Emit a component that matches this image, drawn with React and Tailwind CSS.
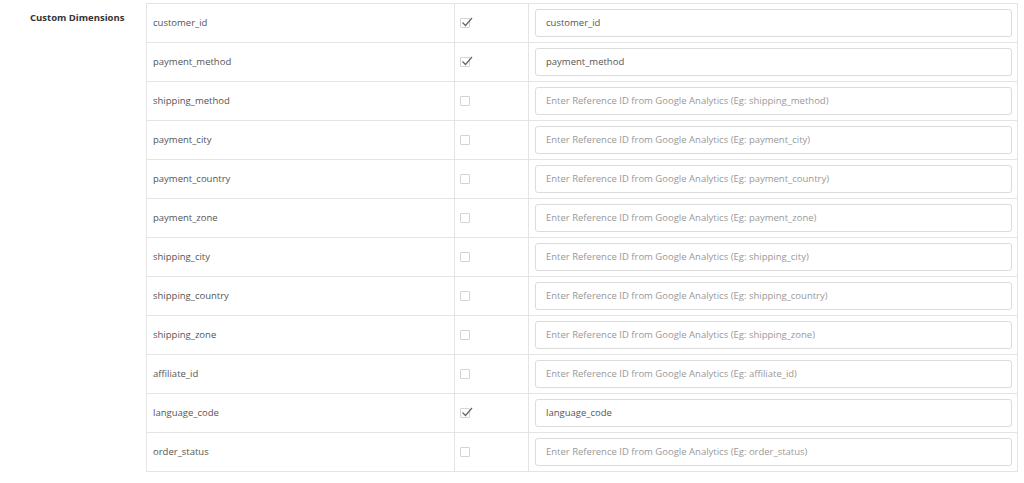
import React from 'react';

const rows = [
  { name: 'customer_id', on: true },
  { name: 'payment_method', on: true },
  { name: 'shipping_method' },
  { name: 'payment_city' },
  { name: 'payment_country' },
  { name: 'payment_zone' },
  { name: 'shipping_city' },
  { name: 'shipping_country' },
  { name: 'shipping_zone' },
  { name: 'affiliate_id' },
  { name: 'language_code', on: true },
  { name: 'order_status' },
];

const Check = ({ on }) => (
  <span className="relative inline-block w-[10px] h-[10px] border border-[#d4d4d4] rounded-[1px] bg-white">
    {on && (
      <svg viewBox="0 0 12 12" className="absolute left-[0px] top-[-3px] w-[12px] h-[12px]">
        <path d="M1.5 6.5 L4.5 9.5 L11 2" fill="none" stroke="#666" strokeWidth="1.2" />
      </svg>
    )}
  </span>
);

export default function App() {
  return (
    <div
      className="flex bg-white w-[1024px] h-[483px] pt-[3px] text-[9.5px] text-[#555]"
      style={{ fontFamily: '"Open Sans", "Liberation Sans", sans-serif' }}
    >
      <div className="w-[146px] shrink-0 pl-[30px] pt-[8px] font-bold text-[#333]">Custom Dimensions</div>
      <div className="w-[872px] border border-[#e4e4e4] self-start">
        {rows.map((r, i) => (
          <div key={r.name} className={`flex ${i ? 'h-[39px] border-t border-[#e4e4e4]' : 'h-[38px]'}`}>
            <div className="w-[307px] flex items-center pl-[6px]">{r.name}</div>
            <div className="w-[74px] border-l border-[#e4e4e4] flex items-center pl-[5px]">
              <Check on={r.on} />
            </div>
            <div className="flex-1 border-l border-[#e4e4e4] flex items-center pl-[6px] pr-[5px]">
              <div className="w-full h-[28px] border border-[#dcdcdc] rounded-[3px] flex items-center pl-[10px]">
                {r.on ? (
                  <span className="text-[#555]">{r.name}</span>
                ) : (
                  <span className="text-[#999]">
                    Enter Reference ID from Google Analytics (Eg: {r.name})
                  </span>
                )}
              </div>
            </div>
          </div>
        ))}
      </div>
    </div>
  );
}
